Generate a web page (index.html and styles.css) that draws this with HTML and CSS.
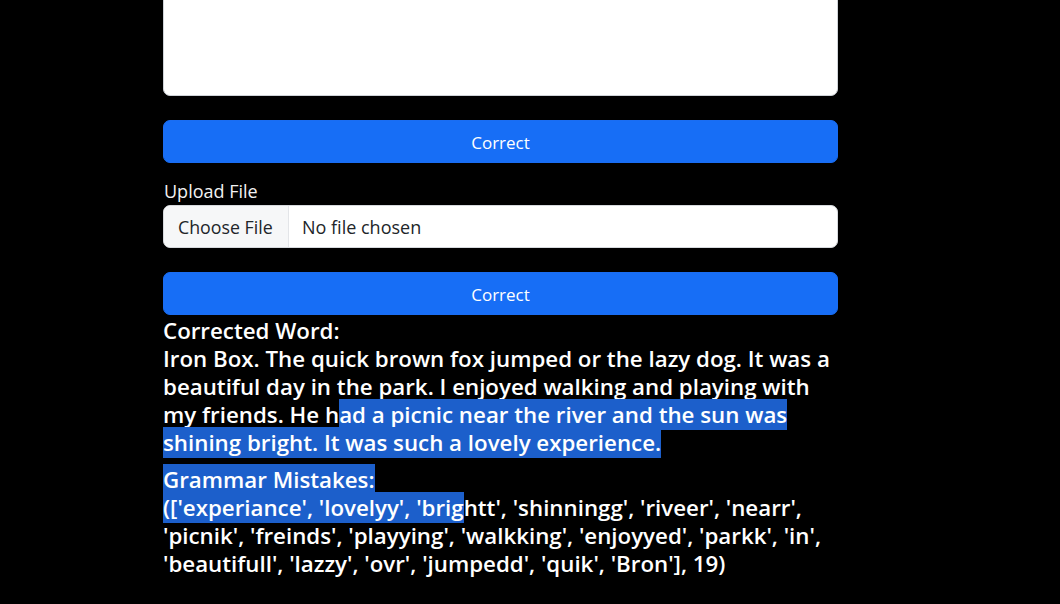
FILE: index.html
```html
<!DOCTYPE html>
<html lang="en">
<head>
<meta charset="utf-8">
<title>Grammar Corrector</title>
<link rel="stylesheet" href="styles.css">
</head>
<body>
<main class="page">
  <div class="form">
    <textarea class="text-input" aria-label="Text"></textarea>
    <button class="btn-primary first" type="button">Correct</button>
    <label class="label" for="file">Upload File</label>
    <div class="file-input">
      <span class="file-btn">Choose File</span>
      <span class="file-name">No file chosen</span>
    </div>
    <button class="btn-primary second" type="button">Correct</button>
  </div>
  <h5 class="result">Corrected Word:<br>Iron Box. The quick brown fox jumped or the lazy dog. It was a<br>beautiful day in the park. I enjoyed walking and playing with<br>my friends. He h<span class="sel">ad a picnic near the river and the sun was </span><br><span class="sel">shining bright. It was such a lovely experience. </span></h5>
  <h5 class="result"><span class="sel">Grammar Mistakes: </span><br><span class="sel">([&#39;experiance&#39;, &#39;lovelyy&#39;, &#39;brig</span>htt&#39;, &#39;shinningg&#39;, &#39;riveer&#39;, &#39;nearr&#39;,<br>&#39;picnik&#39;, &#39;freinds&#39;, &#39;playying&#39;, &#39;walkking&#39;, &#39;enjoyyed&#39;, &#39;parkk&#39;, &#39;in&#39;,<br>&#39;beautifull&#39;, &#39;lazzy&#39;, &#39;ovr&#39;, &#39;jumpedd&#39;, &#39;quik&#39;, &#39;Bron&#39;], 19)</h5>
</main>
</body>
</html>
```

FILE: styles.css
```css
* { box-sizing: border-box; }
html, body { margin: 0; padding: 0; background: #000; }
body {
  font-family: "Open Sans", "Noto Sans", sans-serif;
  color: #fff;
  overflow: hidden;
  height: 604px;
}
.page {
  width: 675px;
  margin-left: 163px;
  display: flex;
  flex-direction: column;
}
.form {
  display: flex;
  flex-direction: column;
}
.text-input {
  display: block;
  width: 100%;
  height: 137px;
  margin-top: -41px;
  border: 1px solid #cfd3d8;
  border-radius: 7px;
  background: #fff;
  resize: none;
  outline: none;
}
.btn-primary {
  display: block;
  width: 100%;
  height: 43px;
  border: 1px solid #1a6df2;
  border-radius: 7px;
  background: #176ef6;
  color: #fff;
  font-family: inherit;
  font-size: 17px;
  padding: 2px 0 0;
}
.btn-primary.first { margin-top: 24px; }
.btn-primary.second { margin-top: 24px; }
.label {
  margin-top: 15px;
  height: 27px;
  line-height: 27px;
  font-size: 18px;
  color: #f2f2f2;
  padding-left: 1px;
}
.file-input {
  display: flex;
  align-items: stretch;
  height: 43px;
  border: 1px solid #d6d9dd;
  border-radius: 7px;
  background: #fff;
  overflow: hidden;
  color: #212529;
}
.file-btn {
  display: flex;
  align-items: center;
  padding: 0 14px;
  width: 125px;
  background: #f6f7f8;
  border-right: 1px solid #e3e5e8;
  font-size: 17.8px;
  white-space: nowrap;
}
.file-name {
  display: flex;
  align-items: center;
  padding-left: 13px;
  font-size: 18px;
}
.result {
  margin: 0;
  font-size: 22.3px;
  font-weight: 600;
  line-height: 28px;
  color: #fff;
  white-space: nowrap;
}
.result:first-of-type { margin-top: 2px; }
.result + .result { margin-top: 9px; }
.sel {
  background: #1c5fcb;
}
```
